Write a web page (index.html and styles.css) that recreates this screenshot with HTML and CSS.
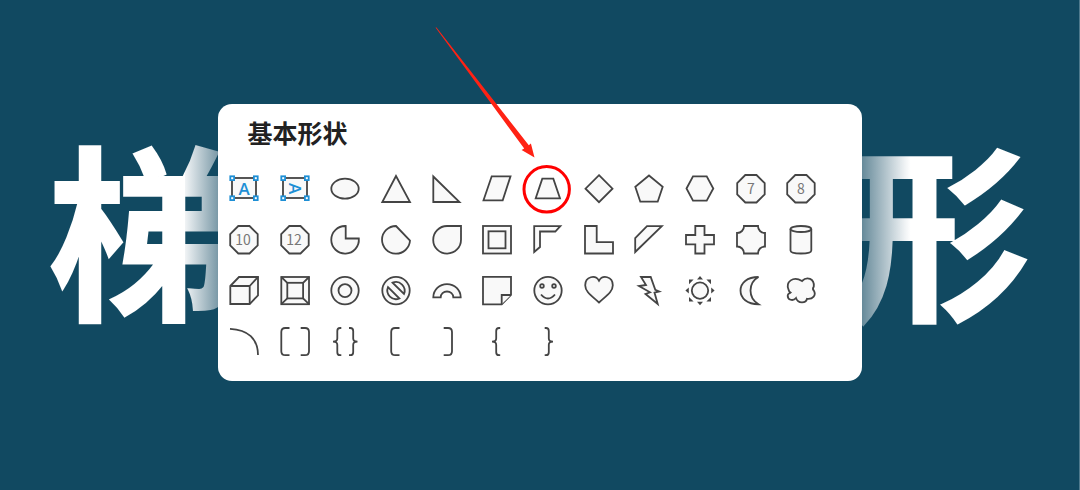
FILE: index.html
```html
<!DOCTYPE html>
<html lang="zh-CN">

<head>
    <meta charset="UTF-8">
    <meta name="viewport" content="width=device-width, initial-scale=1.0">
    <title>梯形 - 基本形状</title>
    <link rel="stylesheet" href="styles.css">
</head>

<body>
    <main class="stage">
        <h1 class="headline">
            <span class="fade-right">梯</span>
            <span class="fade-left">形</span>
        </h1>

        <section class="panel" aria-labelledby="panelTitle">
            <h2 class="panel-title" id="panelTitle">基本形状</h2>
            <div class="shapes">
                <!-- row 1 -->
                <button type="button" class="shape" aria-label="文本框">
                    <svg viewBox="0 0 32 32">
                        <rect x="4" y="5" width="24" height="20" />
                        <g class="handle">
                            <rect x="2.3" y="3.3" width="3.8" height="3.8" />
                            <rect x="25.9" y="3.3" width="3.8" height="3.8" />
                            <rect x="2.3" y="23.3" width="3.8" height="3.8" />
                            <rect x="25.9" y="23.3" width="3.8" height="3.8" />
                        </g>
                        <text class="letter" x="16" y="21.5">A</text>
                    </svg>
                </button>
                <button type="button" class="shape" aria-label="竖排文本框">
                    <svg viewBox="0 0 32 32">
                        <rect x="4" y="5" width="24" height="20" />
                        <g class="handle">
                            <rect x="2.3" y="3.3" width="3.8" height="3.8" />
                            <rect x="25.9" y="3.3" width="3.8" height="3.8" />
                            <rect x="2.3" y="23.3" width="3.8" height="3.8" />
                            <rect x="25.9" y="23.3" width="3.8" height="3.8" />
                        </g>
                        <text class="letter" x="16" y="21.5" transform="rotate(90 16 15.5)">A</text>
                    </svg>
                </button>
                <button type="button" class="shape" aria-label="椭圆">
                    <svg viewBox="0 0 32 32"><ellipse cx="16" cy="15.7" rx="13.7" ry="10" /></svg>
                </button>
                <button type="button" class="shape" aria-label="等腰三角形">
                    <svg viewBox="0 0 32 32"><path d="M16 3L30 29H2.3Z" /></svg>
                </button>
                <button type="button" class="shape" aria-label="直角三角形">
                    <svg viewBox="0 0 32 32"><path d="M2.3 3.5L28.5 29H2.3Z" /></svg>
                </button>
                <button type="button" class="shape" aria-label="平行四边形">
                    <svg viewBox="0 0 32 32"><path d="M10.7 3.3H29.5L21.7 27.3H2.5Z" /></svg>
                </button>
                <button type="button" class="shape" aria-label="梯形">
                    <svg viewBox="0 0 32 32"><path d="M10.3 5.7H21.3L28 25.3H3.7Z" /></svg>
                    <svg class="callout" viewBox="0 0 137 187" aria-hidden="true">
                        <path d="M-.5 -.5L.5 -.5L92.8 117.2L94.9 115.6L98.5 129.5L85.6 122L88.2 120.6Z" />
                        <circle cx="110.7" cy="161.3" r="22.7" />
                    </svg>
                </button>
                <button type="button" class="shape" aria-label="菱形">
                    <svg viewBox="0 0 32 32"><path d="M16 2.2L29.5 15.7L16 29.2L2.5 15.7Z" /></svg>
                </button>
                <button type="button" class="shape" aria-label="五边形">
                    <svg viewBox="0 0 32 32"><path d="M16 2.5L29.7 13.7L24.7 28.7H7.3L2.3 13.7Z" /></svg>
                </button>
                <button type="button" class="shape" aria-label="六边形">
                    <svg viewBox="0 0 32 32"><path d="M2.5 15.5L9 3.3H22.7L29.3 15.5L22.7 27.7H9Z" /></svg>
                </button>
                <button type="button" class="shape" aria-label="七边形">
                    <svg viewBox="0 0 32 32">
                        <path d="M10.3 2H21.5L29.7 10.2V21.3L21.5 29.5H10.3L2.2 21.3V10.2Z" />
                        <text class="digits" x="16" y="21">7</text>
                    </svg>
                </button>
                <button type="button" class="shape" aria-label="八边形">
                    <svg viewBox="0 0 32 32">
                        <path d="M10.3 2H21.5L29.7 10.2V21.3L21.5 29.5H10.3L2.2 21.3V10.2Z" />
                        <text class="digits" x="16" y="21">8</text>
                    </svg>
                </button>

                <!-- row 2 -->
                <button type="button" class="shape" aria-label="十边形">
                    <svg viewBox="0 0 32 32">
                        <path d="M10.3 2H21.5L29.7 10.2V21.3L21.5 29.5H10.3L2.2 21.3V10.2Z" />
                        <text class="digits" x="15" y="21">10</text>
                    </svg>
                </button>
                <button type="button" class="shape" aria-label="十二边形">
                    <svg viewBox="0 0 32 32">
                        <path d="M10.3 2H21.5L29.7 10.2V21.3L21.5 29.5H10.3L2.2 21.3V10.2Z" />
                        <text class="digits" x="15" y="21">12</text>
                    </svg>
                </button>
                <button type="button" class="shape" aria-label="饼形">
                    <svg viewBox="0 0 32 32"><path d="M16.7 2V14.5H29.8A13.8 13.8 0 1 1 16.7 2Z" /></svg>
                </button>
                <button type="button" class="shape" aria-label="弦形">
                    <svg viewBox="0 0 32 32"><path d="M16 2L30 16.5A14 13.8 0 1 1 16 2Z" /></svg>
                </button>
                <button type="button" class="shape" aria-label="泪滴形">
                    <svg viewBox="0 0 32 32"><path d="M30 2V15.7A13.9 13.8 0 1 1 16 2Z" /></svg>
                </button>
                <button type="button" class="shape" aria-label="图文框">
                    <svg viewBox="0 0 32 32">
                        <rect x="2" y="2" width="28" height="27.5" />
                        <rect x="7.5" y="7.3" width="17" height="17" />
                    </svg>
                </button>
                <button type="button" class="shape" aria-label="半闭框">
                    <svg viewBox="0 0 32 32"><path d="M2.2 2.2H28.3L23.3 7.5H8V23L2.2 28Z" /></svg>
                </button>
                <button type="button" class="shape" aria-label="L 形">
                    <svg viewBox="0 0 32 32"><path d="M2 2H13.7V18.2H30V29.5H2Z" /></svg>
                </button>
                <button type="button" class="shape" aria-label="斜纹">
                    <svg viewBox="0 0 32 32"><path d="M2.2 28V14L14 2.2H28.8Z" /></svg>
                </button>
                <button type="button" class="shape" aria-label="十字形">
                    <svg viewBox="0 0 32 32"><path d="M11.3 2H20.5V11H30V20.3H20.5V29.5H11.3V20.3H2V11H11.3Z" /></svg>
                </button>
                <button type="button" class="shape" aria-label="缺角矩形">
                    <svg viewBox="0 0 32 32"><path d="M9 2H23A6.8 6.8 0 0 0 30 9V22.5A6.8 6.8 0 0 0 23 29.5H9A6.8 6.8 0 0 0 2 22.5V9A6.8 6.8 0 0 0 9 2Z" /></svg>
                </button>
                <button type="button" class="shape" aria-label="圆柱形">
                    <svg viewBox="0 0 32 32">
                        <path d="M5.5 5V26.5C5.5 30.5 26.3 30.5 26.3 26.5V5" />
                        <ellipse cx="15.9" cy="5" rx="10.4" ry="3" />
                    </svg>
                </button>

                <!-- row 3 -->
                <button type="button" class="shape" aria-label="立方体">
                    <svg viewBox="0 0 32 32">
                        <path d="M2.3 11L11 2H30V20.3L21.7 29H2.3Z" />
                        <path d="M2.3 11H21.7V29M21.7 11L30 2" />
                    </svg>
                </button>
                <button type="button" class="shape" aria-label="棱台">
                    <svg viewBox="0 0 32 32">
                        <rect x="2.3" y="2" width="27.7" height="27.2" />
                        <rect x="8.3" y="7.8" width="15.8" height="15.6" />
                        <path d="M2.3 2L8.3 7.8M30 2L24.1 7.8M2.3 29.2L8.3 23.4M30 29.2L24.1 23.4" />
                    </svg>
                </button>
                <button type="button" class="shape" aria-label="圆环">
                    <svg viewBox="0 0 32 32">
                        <circle cx="16" cy="15.6" r="13.7" />
                        <circle cx="16" cy="15.6" r="6.5" />
                    </svg>
                </button>
                <button type="button" class="shape" aria-label="禁止符">
                    <svg viewBox="0 0 32 32">
                        <circle cx="16" cy="15.6" r="13.7" />
                        <path d="M12.6 7.7A8.7 8.7 0 0 1 24 19Z" />
                        <path d="M8 12.2A8.7 8.7 0 0 0 19.4 23.5Z" />
                    </svg>
                </button>
                <button type="button" class="shape" aria-label="空心弧">
                    <svg viewBox="0 0 32 32"><path d="M2.3 22.3A13.7 13.2 0 0 1 29.7 22.3H22.3A6.3 5.8 0 0 0 9.7 22.3Z" /></svg>
                </button>
                <button type="button" class="shape" aria-label="折角形">
                    <svg viewBox="0 0 32 32">
                        <path d="M2 1.8H30V20L20.7 29.3H2Z" />
                        <path d="M20.7 29.3V20H30" />
                    </svg>
                </button>
                <button type="button" class="shape" aria-label="笑脸">
                    <svg viewBox="0 0 32 32">
                        <circle cx="16" cy="15.6" r="13.7" />
                        <circle cx="10" cy="11" r="1.8" />
                        <circle cx="22" cy="11" r="1.8" />
                        <path d="M9 19.5Q16 27.5 23 19.5" />
                    </svg>
                </button>
                <button type="button" class="shape" aria-label="心形">
                    <svg viewBox="0 0 32 32"><path d="M16 5.7C12.5 -.5 2.2 1.2 2.2 10.2C2.2 17 9 21 16 27.5C23 21 29.8 17 29.8 10.2C29.8 1.2 19.5 -.5 16 5.7Z" /></svg>
                </button>
                <button type="button" class="shape" aria-label="闪电形">
                    <svg viewBox="0 0 32 32"><path d="M8 2H17.7L22.3 14.8L26.2 16.5L21.5 17.6L24.7 29L12.5 19L17 17.3L6 11L13 10Z" /></svg>
                </button>
                <button type="button" class="shape" aria-label="太阳形">
                    <svg viewBox="0 0 32 32">
                        <circle cx="16" cy="15.6" r="8.2" />
                        <g class="rays">
                            <path d="M16 1L19 4.4H13ZM16 30.2L19 26.8H13ZM1.4 15.6L4.8 12.6V18.6ZM30.6 15.6L27.2 12.6V18.6Z" />
                            <path d="M5 4.6H9.6L5 9.2ZM27 4.6H22.4L27 9.2ZM5 26.6H9.6L5 22ZM27 26.6H22.4L27 22Z" />
                        </g>
                    </svg>
                </button>
                <button type="button" class="shape" aria-label="新月形">
                    <svg viewBox="0 0 32 32"><path d="M23.5 2C12 2 5.5 8 5.5 15.6C5.5 23.2 12 29.3 23.5 29.3C18 26 15.5 21 15.5 15.6C15.5 10.2 18 5 23.5 2Z" /></svg>
                </button>
                <button type="button" class="shape" aria-label="云形">
                    <svg viewBox="0 0 32 32"><path d="M3.5 14.5C.5 7 8 .5 17 6C22 1 29.5 3.5 28.8 11.5C27.5 13.5 27.5 14.5 28.8 15.5C31.5 20 28 24.5 22 23.8C21 28.5 13 29 11 23C8 26.5 2.5 25 2.7 20.5C2.8 18.5 4.5 18.5 5.5 17.5C4.5 17 3.8 16 3.5 14.5Z" /></svg>
                </button>

                <!-- row 4 -->
                <button type="button" class="shape" aria-label="弧形">
                    <svg viewBox="0 0 32 32" class="open"><path d="M2 2.8C20 3.5 30 13 30 29" /></svg>
                </button>
                <button type="button" class="shape" aria-label="双括号">
                    <svg viewBox="0 0 32 32" class="open"><path d="M10.5 2H6.3Q2.3 2 2.3 6V25.2Q2.3 29.2 6.3 29.2H10.5M21.7 2H26Q30 2 30 6V25.2Q30 29.2 26 29.2H21.7" /></svg>
                </button>
                <button type="button" class="shape" aria-label="双大括号">
                    <svg viewBox="0 0 32 32" class="open"><path d="M12.3 2H11Q8.3 2 8.3 5V12.5Q8.3 15.6 4 15.6Q8.3 15.6 8.3 18.7V26.2Q8.3 29.2 11 29.2H12.3M20 2H21.3Q24.2 2 24.2 5V12.5Q24.2 15.6 28.5 15.6Q24.2 15.6 24.2 18.7V26.2Q24.2 29.2 21.3 29.2H20" /></svg>
                </button>
                <button type="button" class="shape" aria-label="左中括号">
                    <svg viewBox="0 0 32 32" class="open"><path d="M19.5 2H15.2Q11.2 2 11.2 6V25.2Q11.2 29.2 15.2 29.2H19.5" /></svg>
                </button>
                <button type="button" class="shape" aria-label="右中括号">
                    <svg viewBox="0 0 32 32" class="open"><path d="M12.7 2H17Q21 2 21 6V25.2Q21 29.2 17 29.2H12.7" /></svg>
                </button>
                <button type="button" class="shape" aria-label="左大括号">
                    <svg viewBox="0 0 32 32" class="open"><path d="M19.2 2H18Q15.2 2 15.2 5V12.5Q15.2 15.6 11 15.6Q15.2 15.6 15.2 18.7V26.2Q15.2 29.2 18 29.2H19.2" /></svg>
                </button>
                <button type="button" class="shape" aria-label="右大括号">
                    <svg viewBox="0 0 32 32" class="open"><path d="M12.7 2H14Q16.8 2 16.8 5V12.5Q16.8 15.6 21 15.6Q16.8 15.6 16.8 18.7V26.2Q16.8 29.2 14 29.2H12.7" /></svg>
                </button>
            </div>
        </section>
    </main>
</body>

</html>
```
FILE: styles.css
```css
* {
    box-sizing: border-box;
}

body {
    margin: 0;
    font-family: "Noto Sans CJK SC", sans-serif;
    background-color: #114961;
}

/* headline and panel share one grid cell, the panel on top */
.stage {
    display: grid;
    align-items: center;
    min-height: 100vh;
    padding-bottom: 5px;
    border-right: 1px solid #4f7a8d;
}

.headline,
.panel {
    grid-area: 1 / 1;
}

.headline {
    display: flex;
    justify-content: space-between;
    margin: 0;
    padding: 0 48px 38px;
    font-size: 188px;
    font-weight: 700;
    line-height: 240px;
    color: transparent;
    -webkit-text-stroke: 2px transparent;
}

.fade-right {
    background: linear-gradient(to right, #fff 73%, #f0f3f5 73%, #114961 106%);
    background-clip: text;
    -webkit-background-clip: text;
}

.fade-left {
    background: linear-gradient(to left, #fff 64%, #f0f3f5 67%, #114961 104%);
    background-clip: text;
    -webkit-background-clip: text;
}

.panel {
    justify-self: center;
    width: 100%;
    max-width: 644px;
    padding: 10px 35px 14px 1px;
    background: #fff;
    border-radius: 14px;
}

.panel-title {
    margin: 0 0 14px;
    padding-left: 29px;
    font-size: 25px;
    font-weight: 700;
    line-height: 36px;
    color: #222;
}

.shapes {
    display: grid;
    grid-template-columns: repeat(12, 1fr);
}

.shape {
    position: relative;
    display: flex;
    align-items: center;
    justify-content: center;
    aspect-ratio: 1;
    padding: 0;
    border: none;
    background: none;
    cursor: pointer;
}

.shape svg {
    flex: none;
    width: 32px;
    height: 32px;
    fill: #f9f9f9;
    stroke: #444;
    stroke-width: 1.8;
}

.shape .open {
    fill: none;
}

.shape .handle {
    fill: #fff;
    stroke: #1e8fd5;
    stroke-width: 1.8;
}

.shape .rays {
    fill: #444;
    stroke: none;
}

.shape .letter {
    font-family: "Open Sans", sans-serif;
    font-size: 17px;
    font-weight: 600;
    text-anchor: middle;
    fill: #1e8fd5;
    stroke: none;
}

.shape .digits {
    font-family: "Noto Sans CJK SC", sans-serif;
    font-size: 14px;
    font-weight: 400;
    text-anchor: middle;
    fill: #777;
    stroke: none;
}

/* red ring and arrow over the highlighted shape */
.shape .callout {
    position: absolute;
    right: 0;
    bottom: 0;
    width: 137px;
    height: 187px;
    fill: none;
    stroke: none;
    overflow: visible;
    pointer-events: none;
}

.callout path {
    fill: #ff2214;
}

.callout circle {
    stroke: #f00;
    stroke-width: 3;
}
```
